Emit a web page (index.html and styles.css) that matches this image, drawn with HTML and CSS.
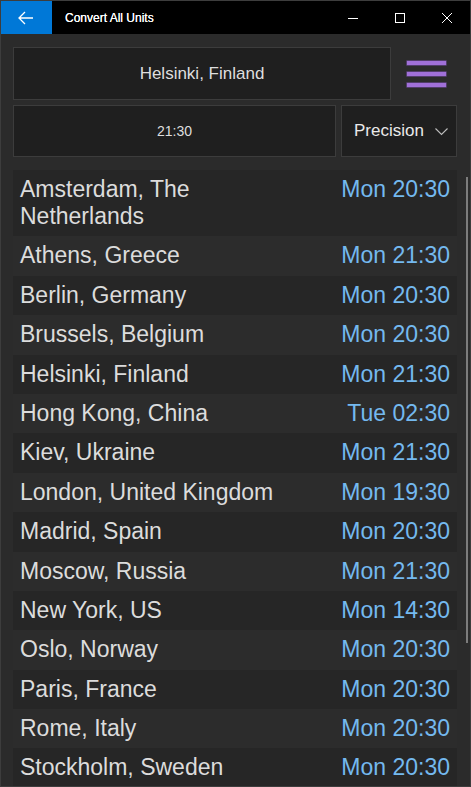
FILE: index.html
```html
<!DOCTYPE html>
<html>
<head>
<meta charset="utf-8">
<link rel="stylesheet" href="styles.css">
</head>
<body>
<div class="window">
  <div class="titlebar">
    <div class="back">
      <svg width="16" height="14" viewBox="0 0 16 14"><path d="M1 7H15M7 1L1 7L7 13" fill="none" stroke="#fff" stroke-width="1.3"/></svg>
    </div>
    <div class="title">Convert All Units</div>
    <div class="controls">
      <div class="ctl"><svg width="12" height="12" viewBox="0 0 12 12"><path d="M1 6.5H11" stroke="#fff" stroke-width="1"/></svg></div>
      <div class="ctl"><svg width="12" height="12" viewBox="0 0 12 12"><rect x="1.5" y="1.5" width="9" height="9" fill="none" stroke="#fff" stroke-width="1"/></svg></div>
      <div class="ctl"><svg width="12" height="12" viewBox="0 0 12 12"><path d="M1 1L11 11M11 1L1 11" stroke="#fff" stroke-width="1"/></svg></div>
    </div>
  </div>
  <div class="content">
    <div class="toprow">
      <div class="box city">Helsinki, Finland</div>
      <div class="menu">
        <span class="bar"></span><span class="bar"></span><span class="bar"></span>
      </div>
    </div>
    <div class="secondrow">
      <div class="box time">21:30</div>
      <div class="box precision"><span>Precision</span>
        <svg class="chev" width="13" height="8" viewBox="0 0 13 8"><path d="M0.5 0.5L6.5 6.5L12.5 0.5" fill="none" stroke="#bdbdbd" stroke-width="1.1"/></svg>
      </div>
    </div>
    <div class="list">
      <div class="row dark"><span class="name">Amsterdam, The<br>Netherlands</span><span class="t">Mon 20:30</span></div>
      <div class="row"><span class="name">Athens, Greece</span><span class="t">Mon 21:30</span></div>
      <div class="row dark"><span class="name">Berlin, Germany</span><span class="t">Mon 20:30</span></div>
      <div class="row"><span class="name">Brussels, Belgium</span><span class="t">Mon 20:30</span></div>
      <div class="row dark"><span class="name">Helsinki, Finland</span><span class="t">Mon 21:30</span></div>
      <div class="row"><span class="name">Hong Kong, China</span><span class="t">Tue 02:30</span></div>
      <div class="row dark"><span class="name">Kiev, Ukraine</span><span class="t">Mon 21:30</span></div>
      <div class="row"><span class="name">London, United Kingdom</span><span class="t">Mon 19:30</span></div>
      <div class="row dark"><span class="name">Madrid, Spain</span><span class="t">Mon 20:30</span></div>
      <div class="row"><span class="name">Moscow, Russia</span><span class="t">Mon 21:30</span></div>
      <div class="row dark"><span class="name">New York, US</span><span class="t">Mon 14:30</span></div>
      <div class="row"><span class="name">Oslo, Norway</span><span class="t">Mon 20:30</span></div>
      <div class="row dark"><span class="name">Paris, France</span><span class="t">Mon 20:30</span></div>
      <div class="row"><span class="name">Rome, Italy</span><span class="t">Mon 20:30</span></div>
      <div class="row dark"><span class="name">Stockholm, Sweden</span><span class="t">Mon 20:30</span></div>
    </div>
    <div class="scrollbar"></div>
  </div>
</div>
</body>
</html>
```
FILE: styles.css
```css
html, body {
  margin: 0;
  padding: 0;
  background: #2b2b2b;
}
.window {
  position: relative;
  width: 471px;
  height: 787px;
  box-sizing: border-box;
  border: 1px solid #3d3d3d;
  background: #2b2b2b;
  overflow: hidden;
  font-family: "Liberation Sans", Arial, sans-serif;
  display: flex;
  flex-direction: column;
}
.titlebar {
  height: 33px;
  flex: none;
  background: #000;
  display: flex;
  align-items: center;
}
.back {
  width: 51px;
  height: 33px;
  background: #0078d7;
  display: flex;
  align-items: center;
  justify-content: center;
  padding-right: 2px;
  box-sizing: border-box;
}
.title {
  margin-left: 13px;
  color: #fff;
  font-size: 12px;
  flex: 1;
  text-shadow: 0 0 0.3px #fff;
}
.controls {
  display: flex;
  height: 33px;
}
.ctl {
  width: 48px;
  height: 33px;
  display: flex;
  align-items: center;
  justify-content: center;
}
.ctl:first-child { width: 46px; }
.ctl:last-child { width: 46px; }
.content {
  position: relative;
  flex: 1;
  padding: 13px 13px 0 12px;
  overflow: hidden;
}
.box {
  box-sizing: border-box;
  background: #1f1f1f;
  border: 1px solid #3c3c3c;
  color: #dedede;
  display: flex;
  align-items: center;
  justify-content: center;
}
.toprow {
  display: flex;
  height: 53px;
}
.city {
  width: 378px;
  font-size: 17px;
  padding-top: 1px;
}
.menu {
  flex: 1;
  display: flex;
  flex-direction: column;
  justify-content: center;
  align-items: center;
  gap: 7px;
  padding-left: 5px;
}
.bar {
  display: block;
  width: 39px;
  height: 4px;
  background: #a070d8;
  box-shadow: 0 0 0 0.6px #6a4a92;
}
.secondrow {
  display: flex;
  gap: 5px;
  margin-top: 5px;
  height: 52px;
}
.time {
  width: 323px;
  font-size: 14px;
}
.precision {
  flex: 1;
  font-size: 17px;
  justify-content: flex-start;
  padding-left: 12px;
  color: #eaeaea;
}
.chev {
  margin-left: 11px;
  margin-top: 1px;
}
.list {
  margin-top: 13px;
}
.row {
  display: flex;
  justify-content: space-between;
  align-items: flex-start;
  padding: 6px 7px 6.4px 7px;
  font-size: 23px;
  line-height: 27px;
  background: #2c2c2c;
}
.row.dark {
  background: #262626;
}
.name {
  color: #dcdcdc;
}
.t {
  color: #74b9ef;
  white-space: nowrap;
}
.scrollbar {
  position: absolute;
  left: 465px;
  top: 143px;
  width: 2px;
  height: 466px;
  background: #7c7c7c;
}
```
